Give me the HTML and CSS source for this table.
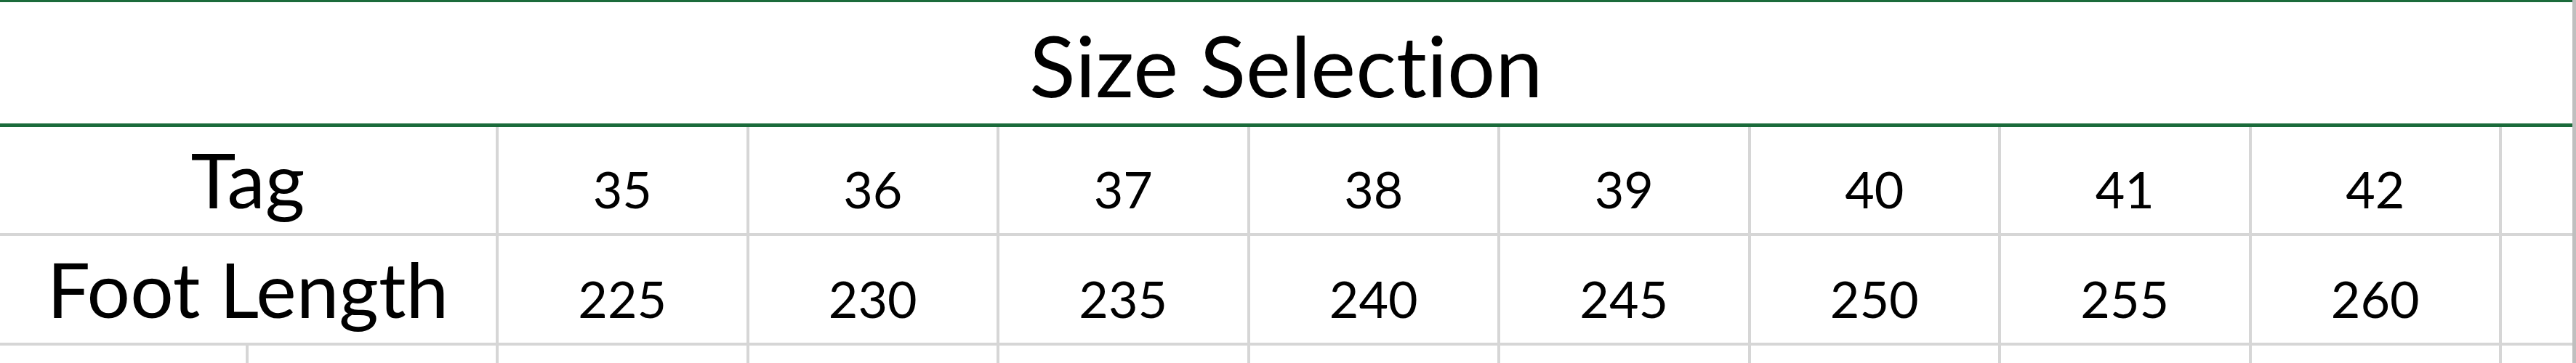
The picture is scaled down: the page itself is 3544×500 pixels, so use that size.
FILE: index.html
```html
<!DOCTYPE html>
<html lang="en">
<head>
<meta charset="utf-8">
<title>Size Selection</title>
<link rel="stylesheet" href="styles.css">
</head>
<body>
<div class="sheet">
  <div class="title-row"><span class="title">Size Selection</span></div>
  <div class="grid">
    <div class="cell label span2">Tag</div>
    <div class="cell num">35</div>
    <div class="cell num">36</div>
    <div class="cell num">37</div>
    <div class="cell num">38</div>
    <div class="cell num">39</div>
    <div class="cell num">40</div>
    <div class="cell num">41</div>
    <div class="cell num">42</div>
    <div class="cell"></div>

    <div class="cell label span2">Foot Length</div>
    <div class="cell num">225</div>
    <div class="cell num">230</div>
    <div class="cell num">235</div>
    <div class="cell num">240</div>
    <div class="cell num">245</div>
    <div class="cell num">250</div>
    <div class="cell num">255</div>
    <div class="cell num">260</div>
    <div class="cell"></div>

    <div class="cell"></div>
    <div class="cell"></div>
    <div class="cell"></div>
    <div class="cell"></div>
    <div class="cell"></div>
    <div class="cell"></div>
    <div class="cell"></div>
    <div class="cell"></div>
    <div class="cell"></div>
    <div class="cell"></div>
    <div class="cell"></div>
  </div>
</div>
</body>
</html>
```

FILE: styles.css
```css
html, body {
  margin: 0;
  padding: 0;
  background: #ffffff;
}

body {
  width: 3544px;
  height: 500px;
  overflow: hidden;
  font-family: Lato, "Open Sans", "Liberation Sans", sans-serif;
  font-variant-ligatures: none;
  color: #000000;
}

.sheet {
  width: 3544px;
  box-sizing: border-box;
  border-right: 5px solid #bfbfbf;
}

.title-row {
  box-sizing: border-box;
  height: 175px;
  border-top: 3px solid #1b6b3b;
  border-bottom: 5px solid #1b6b3b;
  display: flex;
  align-items: flex-end;
  justify-content: center;
  padding-bottom: 22px;
}

.title {
  font-size: 117px;
  line-height: 1;
}

.grid {
  display: grid;
  grid-template-columns: 338px 340px repeat(8, 340.5px) 1fr;
  grid-template-rows: 146px 147px 24px;
  gap: 4px;
  background: #d6d6d6;
}

.cell {
  background: #ffffff;
  display: flex;
  align-items: flex-end;
  justify-content: center;
  line-height: 1;
}

.span2 {
  grid-column: span 2;
}

.label {
  font-size: 105px;
  padding-bottom: 22px;
}

.num {
  font-size: 70px;
  padding-bottom: 26px;
}
```
